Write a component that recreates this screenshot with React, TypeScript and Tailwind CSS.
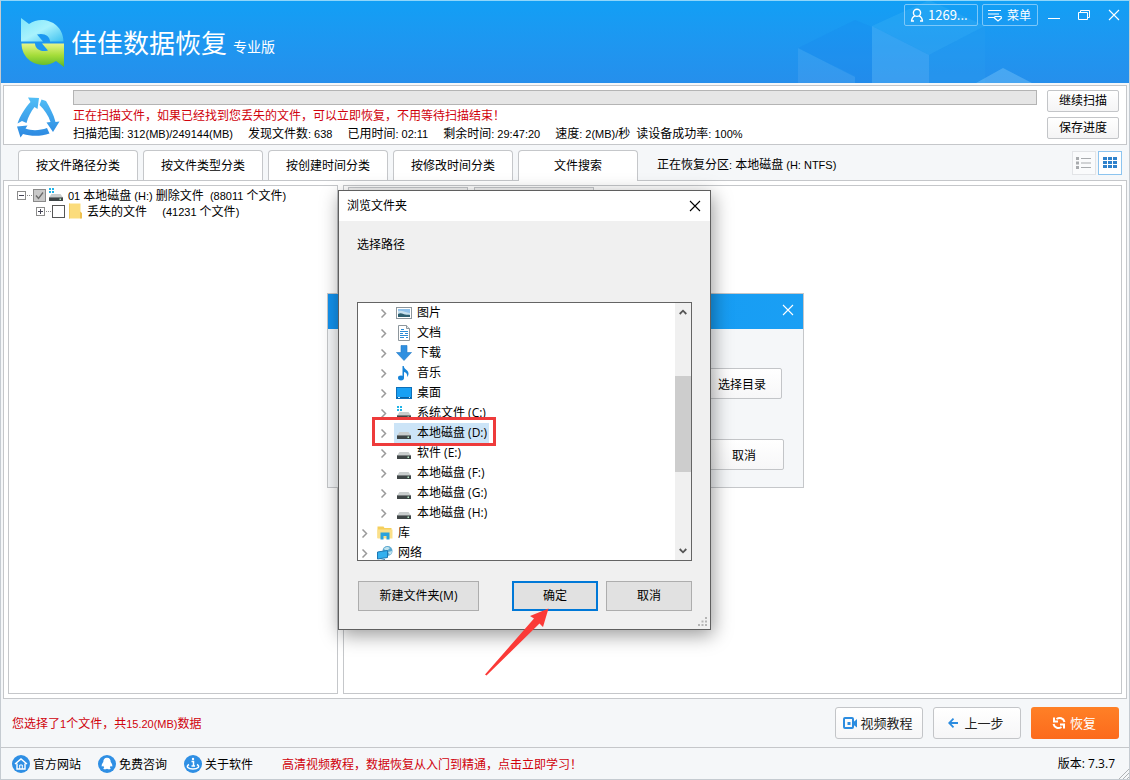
import React, { useState } from 'react';
import clsx from 'clsx';

const TABS = ['按文件路径分类', '按文件类型分类', '按创建时间分类', '按修改时间分类', '文件搜索'];

const STATS = ['扫描范围: 312(MB)/249144(MB)', '发现文件数: 638', '已用时间: 02:11', '剩余时间: 29:47:20', '速度: 2(MB)/秒'];

type IconKind = 'picture' | 'document' | 'download' | 'music' | 'desktop' | 'system' | 'drive' | 'library' | 'network';

interface FolderNode {
  label: string;
  icon: IconKind;
  root?: boolean;
}

const FOLDERS: FolderNode[] = [
  { label: '图片', icon: 'picture' },
  { label: '文档', icon: 'document' },
  { label: '下载', icon: 'download' },
  { label: '音乐', icon: 'music' },
  { label: '桌面', icon: 'desktop' },
  { label: '系统文件 (C:)', icon: 'system' },
  { label: '本地磁盘 (D:)', icon: 'drive' },
  { label: '软件 (E:)', icon: 'drive' },
  { label: '本地磁盘 (F:)', icon: 'drive' },
  { label: '本地磁盘 (G:)', icon: 'drive' },
  { label: '本地磁盘 (H:)', icon: 'drive' },
  { label: '库', icon: 'library', root: true },
  { label: '网络', icon: 'network', root: true },
];

// Sets latin runs one size smaller than the Chinese text around them
const Mixed: React.FC<{ text: string }> = ({ text }) => (
  <span className="whitespace-pre">
    {text.split(/([\x20-\x7e]+)/).map((part, i) =>
      i % 2 ? (
        <span key={i} className="font-['Liberation_Sans','Noto_Sans_CJK_SC',sans-serif] text-[11px]">
          {part}
        </span>
      ) : (
        part
      )
    )}
  </span>
);

const Drive = () => (
  <>
    <path d="M3.500 7h9L15 10.500H1z" fill="#c9cdcd" />
    <rect x="1" y="10" width="14" height="4" rx="0.600" fill="#3f4546" />
    <rect x="1" y="10" width="14" height="1" fill="#7b8081" />
    <rect x="11.500" y="11.500" width="1.500" height="1.500" fill="#b8f0c8" />
  </>
);

const NodeIcon: React.FC<{ kind: IconKind }> = ({ kind }) => (
  <svg viewBox="0 0 16 16" className="h-4 w-4 shrink-0" aria-hidden="true">
    {kind === 'picture' && (
      <>
        <rect x="0.500" y="2.500" width="15" height="11" fill="#fff" stroke="#8d969c" />
        <rect x="2" y="4" width="12" height="8" fill="#8fc1ea" />
        <path d="M2 6c4-1 8 2 12 2v4H2z" fill="#c7e0ee" />
        <path d="M2 9c3-2 5 0 7 .5s4 0 5 .5v2H2z" fill="#2e5f70" />
      </>
    )}
    {kind === 'document' && (
      <>
        <path d="M2.500.500h8l3 3v12h-11z" fill="#fff" stroke="#8d969c" />
        <path d="M10.500.500v3h3" fill="#dfe5e9" stroke="#8d969c" />
        <path d="M5 4.500h3M4 6.500h8M4 8.500h3M9 8.500h3M4 10.500h8M4 12.500h4M10 12.500h2" stroke="#2a8bd6" />
      </>
    )}
    {kind === 'download' && <path d="M5 .500h6v7h4.500L8 15.500.500 7.500H5z" fill="#2f8fe0" stroke="#2078c6" strokeWidth="0.600" />}
    {kind === 'music' && (
      <>
        <ellipse cx="5" cy="13" rx="3" ry="2.400" fill="#1683d8" />
        <path d="M6.500 13V1h1.300c.2 3.500 4.700 4 4.700 7.500 0 1.500-.5 2.500-1.300 3.500.5-3-1.200-4.500-3.200-5V13z" fill="#1683d8" />
      </>
    )}
    {kind === 'desktop' && (
      <>
        <rect x="0.500" y="2.500" width="15" height="11" fill="#18a0f4" stroke="#0d6fb8" />
        <path d="M1 12.500h14" stroke="#0c5f9e" />
        <path d="M2 12.500h2M13 12.500h1" stroke="#d6efff" />
      </>
    )}
    {kind === 'system' && (
      <>
        <Drive />
        <path d="M1 1h2v2H1zM4 1h2v2H4zM1 4h2v2H1zM4 4h2v2H4z" fill="#20b4e8" />
      </>
    )}
    {kind === 'drive' && <Drive />}
    {kind === 'library' && (
      <>
        <path d="M.500 1.500h6l1 1.500h7v10H.500z" fill="#f5cf5c" />
        <path d="M.500 4.500h15v9H.500z" fill="#fbe08a" />
        <path d="M3.500 14.500V7.500h9v7h-3v-3.500h-3v3.500z" fill="#2aa3dd" />
      </>
    )}
    {kind === 'network' && (
      <>
        <circle cx="10.500" cy="6" r="5" fill="#5aa7cf" />
        <path d="M7 3.500c2-2 5-2 6 0-2 0-1 2-3 2s-2 0-3-2zM11 7l4-1c0 2-1 3-2 4z" fill="#bfe3ee" />
        <path d="M.500 7l10-1.500v7L.500 14z" fill="#33b0ee" stroke="#1c78b4" />
        <path d="M3 15.500l5-1" stroke="#357fae" />
      </>
    )}
  </svg>
);

const Logo = () => (
  <svg viewBox="0 0 45 51" className="h-[51px] w-[45px]" aria-hidden="true">
    <defs>
      <linearGradient id="logoTop" x1="0" y1="0" x2="1" y2="1">
        <stop offset="0" stopColor="#7fe6fb" />
        <stop offset="0.500" stopColor="#a8f2fd" />
        <stop offset="1" stopColor="#3cc0f0" />
      </linearGradient>
      <linearGradient id="logoBottom" x1="0" y1="0" x2="0" y2="1">
        <stop offset="0" stopColor="#e6f58a" />
        <stop offset="0.500" stopColor="#a5dd3a" />
        <stop offset="1" stopColor="#5cb827" />
      </linearGradient>
    </defs>
    <path d="M1 1l8 6C22-2 43 5 43.500 24.500H30C30 19 24 15.500 17 17.500l6 7H1z" fill="url(#logoTop)" />
    <path d="M44 50l-8-6C23 53 2 46 1.500 26.500H15C15 32 21 35.500 28 33.500l-6-7h22z" fill="url(#logoBottom)" />
  </svg>
);

const RecycleIcon = () => (
  <svg viewBox="0 0 43 43" className="h-[43px] w-[43px] shrink-0" aria-hidden="true">
    <defs>
      <linearGradient id="recycle" gradientUnits="userSpaceOnUse" x1="0" y1="0" x2="0" y2="43">
        <stop offset="0" stopColor="#52c0f7" />
        <stop offset="1" stopColor="#2a86e0" />
      </linearGradient>
    </defs>
    <g fill="url(#recycle)">
      <path d="M11 1.500l11 .500-1.500 11-3-2C14 15.500 11 21 9.500 27L5 25 .500 27.500C3 20 8 12 13.500 6z" />
      <path d="M24.500 3.500L29 5C33 12 36.500 18 38.500 26l4-.500L36 36l-6.500-9.500 4-.500C31.500 19.500 27.500 14 22.500 9z" />
      <path d="M0 30.500l10.500-1-2 3C15 35 23 34.500 30 32l2.500 5.500C24 40.500 14 40.500 6 38l-2.500 3.500z" />
    </g>
  </svg>
);

const CloseIcon: React.FC<{ className?: string }> = ({ className }) => (
  <svg viewBox="0 0 12 12" className={clsx('h-3 w-3', className)} aria-hidden="true">
    <path d="M1 1l10 10M11 1L1 11" fill="none" stroke="currentColor" strokeWidth="1.100" />
  </svg>
);

// Faint cubes behind the window controls
const HeaderPattern = () => (
  <svg viewBox="0 0 340 82" className="pointer-events-none absolute top-0 right-0 h-[82px] w-[340px]" aria-hidden="true">
    <path d="M9 47l57-28 17 7v56H66v-7z" fill="#1177ea" opacity="0.150" />
    <path d="M9 47l57 29v6H9z" fill="#fff" opacity="0.080" />
    <path d="M83 25l57-26 56 26-56 29z" fill="#4cc0f8" opacity="0.220" />
    <path d="M83 25l57 29v28H83z" fill="#6cc0fa" opacity="0.300" />
    <path d="M140 54l56-29v57h-56z" fill="#2aa0f0" opacity="0.250" />
    <path d="M187 82l27-15 29 15z" fill="#8cd0fc" opacity="0.350" />
  </svg>
);

const Header = () => (
  <header className="relative flex h-[82px] justify-between bg-linear-to-b from-[#119ff5] to-[#258fec] text-white">
    <HeaderPattern />
    <div className="flex items-center pl-[19px]">
      <Logo />
      <h1 className="ml-1.5 text-[26px] leading-8">佳佳数据恢复</h1>
      <span className="mt-2 ml-1.5 text-sm leading-5">专业版</span>
    </div>
    <div className="relative flex h-7 items-center pr-[9px]">
      <button className="flex h-[22px] w-[74px] items-center gap-1 rounded-xs border border-[#7cc8fa] pl-[5px] text-sm leading-5">
        <svg viewBox="0 0 14 14" className="h-3.5 w-3.5" fill="none" stroke="currentColor" strokeWidth="1.400" aria-hidden="true">
          <circle cx="7" cy="4.800" r="3.600" />
          <path d="M1.500 13.500c.2-3 1.700-5 3.500-5.600M12.500 13.500c-.2-3-1.700-5-3.500-5.600M1 13h3M10 13h3" />
        </svg>
        <span className="text-[13px]">1269...</span>
      </button>
      <button className="ml-1 flex h-[22px] w-14 items-center gap-1 rounded-xs border border-[#7cc8fa] pl-1 text-xs leading-5">
        <svg viewBox="0 0 16 14" className="h-3.5 w-4" fill="none" stroke="currentColor" strokeWidth="1.200" aria-hidden="true">
          <path d="M1 2.500h13M1 6h11M1 9.500h6" />
          <path d="M8 8.500h6l.5 1.500-3.500 3-3.500-3z" />
        </svg>
        菜单
      </button>
      <button aria-label="最小化" className="ml-2.5 flex h-5 w-3 items-center">
        <svg viewBox="0 0 12 12" className="h-3 w-3" aria-hidden="true">
          <path d="M0 9.500h12" stroke="currentColor" />
        </svg>
      </button>
      <button aria-label="还原" className="ml-[18px] flex h-5 w-3 items-center">
        <svg viewBox="0 0 12 12" className="h-3 w-3" fill="none" stroke="currentColor" aria-hidden="true">
          <path d="M.500 3.500h9v7h-9zM2.500 3.500v-2h9v7h-2" />
        </svg>
      </button>
      <button aria-label="关闭" className="ml-[18px] flex h-5 w-3 items-center">
        <CloseIcon />
      </button>
    </div>
  </header>
);

const ScanPanel = () => (
  <section className="mx-0.5 mt-0.5 flex h-[60px] border border-[#c5c7ca] bg-white pr-[7px] pl-[13px]">
    <div className="flex items-center pt-1">
      <RecycleIcon />
    </div>
    <div className="ml-[13px] min-w-0 flex-1 pt-1">
      <div role="progressbar" aria-label="扫描进度" className="h-[15px] border border-[#b4b4b4] bg-[#e6e6e6]" />
      <p className="mt-px leading-[18px] text-[#d0020c]">正在扫描文件，如果已经找到您丢失的文件，可以立即恢复，不用等待扫描结束！</p>
      <p className="flex gap-[15px] leading-[18px] whitespace-nowrap">
        {STATS.slice(0, 4).map((stat) => (
          <Mixed key={stat} text={stat} />
        ))}
        <span className="flex gap-1.5">
          <Mixed text={STATS[4]} />
          <Mixed text="读设备成功率: 100%" />
        </span>
      </p>
    </div>
    <div className="ml-2.5 flex w-[72px] flex-col gap-[5px] pt-1">
      {['继续扫描', '保存进度'].map((label) => (
        <button key={label} className="h-[22px] rounded-xs border border-[#c3c5c8] bg-linear-to-b from-white to-[#f4f4f5] pb-0.5 leading-4">
          {label}
        </button>
      ))}
    </div>
  </section>
);

const TabBar: React.FC<{ active: string; onChange: (tab: string) => void }> = ({ active, onChange }) => (
  <div className="flex h-[35px] items-end pr-[7px] pl-[17px]">
    <div role="tablist" className="flex items-end gap-[5px]">
      {TABS.map((tab) => (
        <button
          key={tab}
          role="tab"
          aria-selected={tab === active}
          onClick={() => onChange(tab)}
          className={clsx(
            'relative w-[120px] rounded-t-sm border border-b-0 border-[#c5c7ca] bg-white pb-0.5 leading-4',
            tab === active ? '-mb-px h-[31px]' : 'h-[30px]'
          )}
        >
          {tab}
        </button>
      ))}
    </div>
    <p className="ml-[19px] flex-1 pb-[7px] leading-4">
      <Mixed text="正在恢复分区: 本地磁盘 (H: NTFS)" />
    </p>
    <div className="flex gap-0.5 pb-[5px]">
      <button aria-label="列表" className="flex h-6 w-6 items-center justify-center border border-[#e2e4e7] bg-[#fafbfc]">
        <svg viewBox="0 0 16 12" className="h-3 w-4" fill="#a8abae" aria-hidden="true">
          <path d="M0 0h3v3H0zM0 4.500h3v3H0zM0 9h3v3H0zM5 1h10v1H5zM5 5.500h10v1H5zM5 10h10v1H5z" />
        </svg>
      </button>
      <button aria-label="图标" className="flex h-6 w-6 items-center justify-center border border-[#8cc4ef] bg-white">
        <svg viewBox="0 0 14 12" className="h-3 w-3.5" fill="#2f82cc" aria-hidden="true">
          <path d="M0 0h4v3H0zM5 0h4v3H5zM10 0h4v3h-4zM0 4h4v3H0zM5 4h4v3H5zM10 4h4v3h-4zM0 8h4v3H0zM5 8h4v3H5zM10 8h4v3h-4z" />
        </svg>
      </button>
    </div>
  </div>
);

const Expander: React.FC<{ open?: boolean }> = ({ open }) => (
  <svg viewBox="0 0 15 9" className="h-[9px] w-[15px] shrink-0" fill="none" stroke="#8b8b8b" aria-hidden="true">
    <rect x="0.500" y="0.500" width="8" height="8" fill="#fff" />
    <path d={open ? 'M2 4.500h5' : 'M2 4.500h5M4.500 2v5'} stroke="#445" />
    <path d="M10 4.500h6" strokeDasharray="1 1" />
  </svg>
);

const FileTree = () => {
  const [diskChecked, setDiskChecked] = useState(true);
  const [lostChecked, setLostChecked] = useState(false);

  return (
    <div className="w-[330px] shrink-0 border border-[#c5c7ca] bg-white pt-px pl-2 leading-4">
      <div className="flex h-4 items-center">
        <Expander open />
        <label className="flex items-center">
          <span className="relative ml-px flex">
            <input
              type="checkbox"
              checked={diskChecked}
              onChange={(e) => setDiskChecked(e.target.checked)}
              className="h-[13px] w-[13px] appearance-none border border-[#8a8a8a] bg-[#c9c9c9]"
            />
            {diskChecked && (
              <svg viewBox="0 0 13 13" className="pointer-events-none absolute inset-0 h-[13px] w-[13px]" aria-hidden="true">
                <path d="M3 6.500l2.500 3L10 3.500" fill="none" stroke="#6b6b6b" strokeWidth="1.300" />
              </svg>
            )}
          </span>
          <span className="ml-0.5 flex">
            <NodeIcon kind="system" />
          </span>
          <span className="ml-1">
            <Mixed text="01 本地磁盘 (H:) 删除文件  (88011 个文件)" />
          </span>
        </label>
      </div>
      <div className="flex h-4 items-center pl-[19px]">
        <Expander />
        <label className="flex items-center">
          <input
            type="checkbox"
            checked={lostChecked}
            onChange={(e) => setLostChecked(e.target.checked)}
            className="ml-px h-[13px] w-[13px] appearance-none border border-[#555] bg-white"
          />
          <svg viewBox="0 0 14 16" className="ml-1 h-4 w-3.5" aria-hidden="true">
            <path d="M0 .500h11.500v15H0z" fill="#fbdc7c" />
            <path d="M11 8.500l2 1.500v5.500h-2z" fill="#eec04e" />
            <path d="M0 .500h1v15H0z" fill="#f3cb5c" />
          </svg>
          <span className="ml-1">
            <Mixed text="丢失的文件     (41231 个文件)" />
          </span>
        </label>
      </div>
    </div>
  );
};

const ActionBar = () => (
  <div className="flex h-12 items-center justify-between pr-2.5 pl-[11px]">
    <p className="text-[#d0020c]">
      <Mixed text="您选择了1个文件，共15.20(MB)数据" />
    </p>
    <div className="flex gap-2.5 text-[13px] text-[#222]">
      <button className="flex h-8 w-[88px] items-center justify-center gap-0.5 rounded-[3px] border border-[#c3c5c8] bg-linear-to-b from-white to-[#f6f6f7] pr-0.5">
        <svg viewBox="0 0 15 12" className="h-3 w-[15px]" aria-hidden="true">
          <rect x="1" y="1" width="9" height="10" rx="1" fill="none" stroke="#2b8ce0" strokeWidth="2" />
          <path d="M10 5.500L14 2v8.500L10 7.500z" fill="#2b8ce0" />
          <path d="M4.500 5h3v3h-3z" fill="#2b8ce0" />
        </svg>
        视频教程
      </button>
      <button className="flex h-8 w-[88px] items-center justify-center gap-1.5 rounded-[3px] border border-[#c3c5c8] bg-linear-to-b from-white to-[#f6f6f7] pr-0.5">
        <svg viewBox="0 0 10 10" className="h-2.5 w-2.5" fill="none" stroke="#2b8ce0" strokeWidth="1.800" aria-hidden="true">
          <path d="M5.500.700L1.200 5l4.300 4.300M1.500 5H10" />
        </svg>
        上一步
      </button>
      <button className="flex h-8 w-[88px] items-center justify-center gap-1 rounded-[3px] bg-linear-to-b from-[#ff8026] to-[#fc6a1c] pr-0.5 text-white">
        <svg viewBox="0 0 14 14" className="h-3.5 w-3.5" fill="none" stroke="currentColor" strokeWidth="2" aria-hidden="true">
          <path d="M2 1.500v4h4M4.500 3c3-2 7-1 8 3M12 12.500v-4H8M9.500 11c-3 2-7 1-8-3" />
        </svg>
        恢复
      </button>
    </div>
  </div>
);

const FooterLink: React.FC<{ label: string; children: React.ReactNode }> = ({ label, children }) => (
  <a href="#" className="flex w-[86px] items-center gap-[3px]">
    <svg viewBox="0 0 18 18" className="h-[18px] w-[18px]" aria-hidden="true">
      <circle cx="9" cy="9" r="9" fill="#2f8fe4" />
      {children}
    </svg>
    {label}
  </a>
);

const Footer = () => (
  <footer className="relative flex h-8 items-center border-t border-[#c5c7ca] pr-3.5 pl-[11px]">
    <FooterLink label="官方网站">
      <path d="M3 9l6-5 6 5M5 8.500V14h8V8.500" fill="none" stroke="#fff" strokeWidth="1.400" />
      <path d="M7.700 14v-4h2.600v4" fill="none" stroke="#fff" />
    </FooterLink>
    <FooterLink label="免费咨询">
      <path d="M9 2.800c2.600 0 3.700 2 3.700 4.200 1.300 1.700 1.900 3.200 1.500 4.500-.4.400-1-.3-1.400-.7-.3.700-.6 1.200-1 1.600 1 .5 1.200 1.800-.3 1.900-.9 0-1.800-.2-2.500-.6-.7.400-1.600.6-2.500.600-1.500-.1-1.300-1.400-.3-1.900-.4-.4-.7-.9-1-1.600-.4.400-1 1.100-1.400.700-.4-1.300.2-2.800 1.500-4.500 0-2.200 1.100-4.200 3.700-4.200z" fill="#fff" />
    </FooterLink>
    <FooterLink label="关于软件">
      <circle cx="9" cy="4" r="1.200" fill="#fff" />
      <path d="M7.500 6.500H9.500V11M7.500 11h3.500" fill="none" stroke="#fff" strokeWidth="1.500" />
      <path d="M5 9.500c-3.500 2-1 4.500 4 4.500s7.500-2.500 4-4.500" fill="none" stroke="#fff" strokeWidth="1.500" />
    </FooterLink>
    <a href="#" className="ml-3 text-[#d0020c]">
      高清视频教程，数据恢复从入门到精通，点击立即学习！
    </a>
    <span className="ml-auto font-['Open_Sans','Noto_Sans_CJK_SC',sans-serif]">版本: 7.3.7</span>
    <svg viewBox="0 0 10 10" className="absolute right-0 bottom-0 h-2.5 w-2.5" stroke="#b0b3b6" aria-hidden="true">
      <path d="M0 10L10 0M4 10l6-6M8 10l2-2" />
    </svg>
  </footer>
);

// The save window that waits behind the folder picker
const SaveWindow = () => (
  <div className="absolute top-[292px] left-[326px] flex h-[195px] w-[477px] flex-col border border-[#c5c7ca] bg-[#f5f7f9]">
    <div className="flex h-[35px] items-center justify-end bg-linear-to-r from-[#1292ee] via-[#119af3] to-[#1a9ff4] pr-[9px] pb-1 text-white">
      <button aria-label="关闭窗口">
        <CloseIcon />
      </button>
    </div>
    <div className="flex flex-1 flex-col items-end pr-[19px] pb-[17px]">
      <button className="mt-[39px] mr-0.5 h-[31px] w-20 rounded-xs border border-[#c3c5c8] bg-linear-to-b from-white to-[#f7f7f8]">
        选择目录
      </button>
      <button className="mt-auto h-[31px] w-20 rounded-xs border border-[#c3c5c8] bg-linear-to-b from-white to-[#f7f7f8]">
        取消
      </button>
    </div>
  </div>
);

const FolderDialog = () => {
  const [selected, setSelected] = useState('本地磁盘 (D:)');

  return (
    <div
      role="dialog"
      aria-label="浏览文件夹"
      className="absolute top-[189px] left-[337px] w-[373px] border border-[#5f5f5f] bg-[#f0f0f0] font-['Open_Sans','Noto_Sans_CJK_SC',sans-serif] shadow-[2px_5px_18px_rgba(0,0,0,0.4)]"
    >
      <div className="flex h-[30px] items-center justify-between bg-white pr-[9px] pl-2">
        <h2>浏览文件夹</h2>
        <button aria-label="关闭对话框">
          <CloseIcon />
        </button>
      </div>
      <div className="px-[18px] pt-[15px]">
        <p className="leading-[18px]">选择路径</p>
        <div className="mt-12 flex h-[259px] border border-[#646464] bg-white">
          <ul role="tree" className="min-w-0 flex-1 overflow-hidden">
            {FOLDERS.map(({ label, icon, root }) => (
              <li
                key={label}
                role="treeitem"
                aria-selected={label === selected}
                onClick={() => setSelected(label)}
                className={clsx('flex h-5 items-center', root ? 'pl-0.5' : 'pl-[21px]')}
              >
                <svg viewBox="0 0 9 9" className="h-[9px] w-[9px]" fill="none" stroke="#9a9a9a" strokeWidth="1.500" aria-hidden="true">
                  <path d="M2.500.500l4 4-4 4" />
                </svg>
                <span className={clsx('ml-1.5 flex h-5 items-center gap-[5px] pr-0.5 pl-0.5', label === selected && 'bg-[#cce4f7]')}>
                  <NodeIcon kind={icon} />
                  {label}
                </span>
              </li>
            ))}
          </ul>
          <div className="flex w-4 flex-col items-center bg-[#f0f0f0] py-1.5">
            <svg viewBox="0 0 8 6" className="h-1.5 w-2" fill="none" stroke="#555" strokeWidth="1.800" aria-hidden="true">
              <path d="M.700 5L4 1.700 7.300 5" />
            </svg>
            <div className="mt-[61px] h-24 w-4 bg-[#cdcdcd]" />
            <svg viewBox="0 0 8 6" className="mt-auto h-1.5 w-2" fill="none" stroke="#555" strokeWidth="1.800" aria-hidden="true">
              <path d="M.700 1L4 4.300 7.300 1" />
            </svg>
          </div>
        </div>
        <div className="mt-5 flex h-12 pl-px">
          <button className="h-[30px] w-[121px] border border-[#adadad] bg-[#e1e1e1]">新建文件夹(M)</button>
          <button className="ml-auto h-[30px] w-[86px] border-2 border-[#0078d7] bg-[#e1e1e1]">确定</button>
          <button className="ml-2 h-[30px] w-[86px] border border-[#adadad] bg-[#e1e1e1]">取消</button>
        </div>
      </div>
      <svg viewBox="0 0 10 10" className="absolute right-0.5 bottom-0.5 h-2.5 w-2.5" fill="#b5b5b5" aria-hidden="true">
        <path d="M7 0h2v2H7zM3.500 3.500h2v2h-2zM7 3.500h2v2H7zM0 7h2v2H0zM3.500 7h2v2h-2zM7 7h2v2H7z" />
      </svg>
      {/* Highlight and arrow */}
      <div className="pointer-events-none absolute top-[226px] left-[33px] h-[29px] w-[124px] border-3 border-[#ee3b3b]" />
      <svg viewBox="0 0 66 70" className="pointer-events-none absolute top-[415px] left-[145px] h-[70px] w-[66px]" aria-hidden="true">
        <path d="M64.500 2.500L46 10l4 2.500L1 68.500l1.500 1L55.500 17.500l3.500 3.500z" fill="#fb3a37" />
      </svg>
    </div>
  );
};

export default function App() {
  const [activeTab, setActiveTab] = useState('文件搜索');

  return (
    <div className="relative flex min-h-screen flex-col border border-[#c5cbd1] border-t-[#8fd6fa] bg-[#f5f7f9] font-['Noto_Sans_CJK_SC',sans-serif] text-xs text-black">
      <Header />
      <ScanPanel />
      <TabBar active={activeTab} onChange={setActiveTab} />
      <main className="mx-0.5 flex flex-1 gap-[5px] border border-[#c5c7ca] bg-white p-1">
        <FileTree />
        <div className="flex flex-1 items-start gap-1.5 border border-[#c5c7ca] bg-white pt-px pl-1">
          <div className="h-6 w-[120px] border border-[#c5c7ca] bg-[#f5f5f5]" />
          <div className="h-6 w-[120px] border border-[#c5c7ca] bg-[#f5f5f5]" />
        </div>
      </main>
      <ActionBar />
      <Footer />
      <SaveWindow />
      <FolderDialog />
    </div>
  );
}
